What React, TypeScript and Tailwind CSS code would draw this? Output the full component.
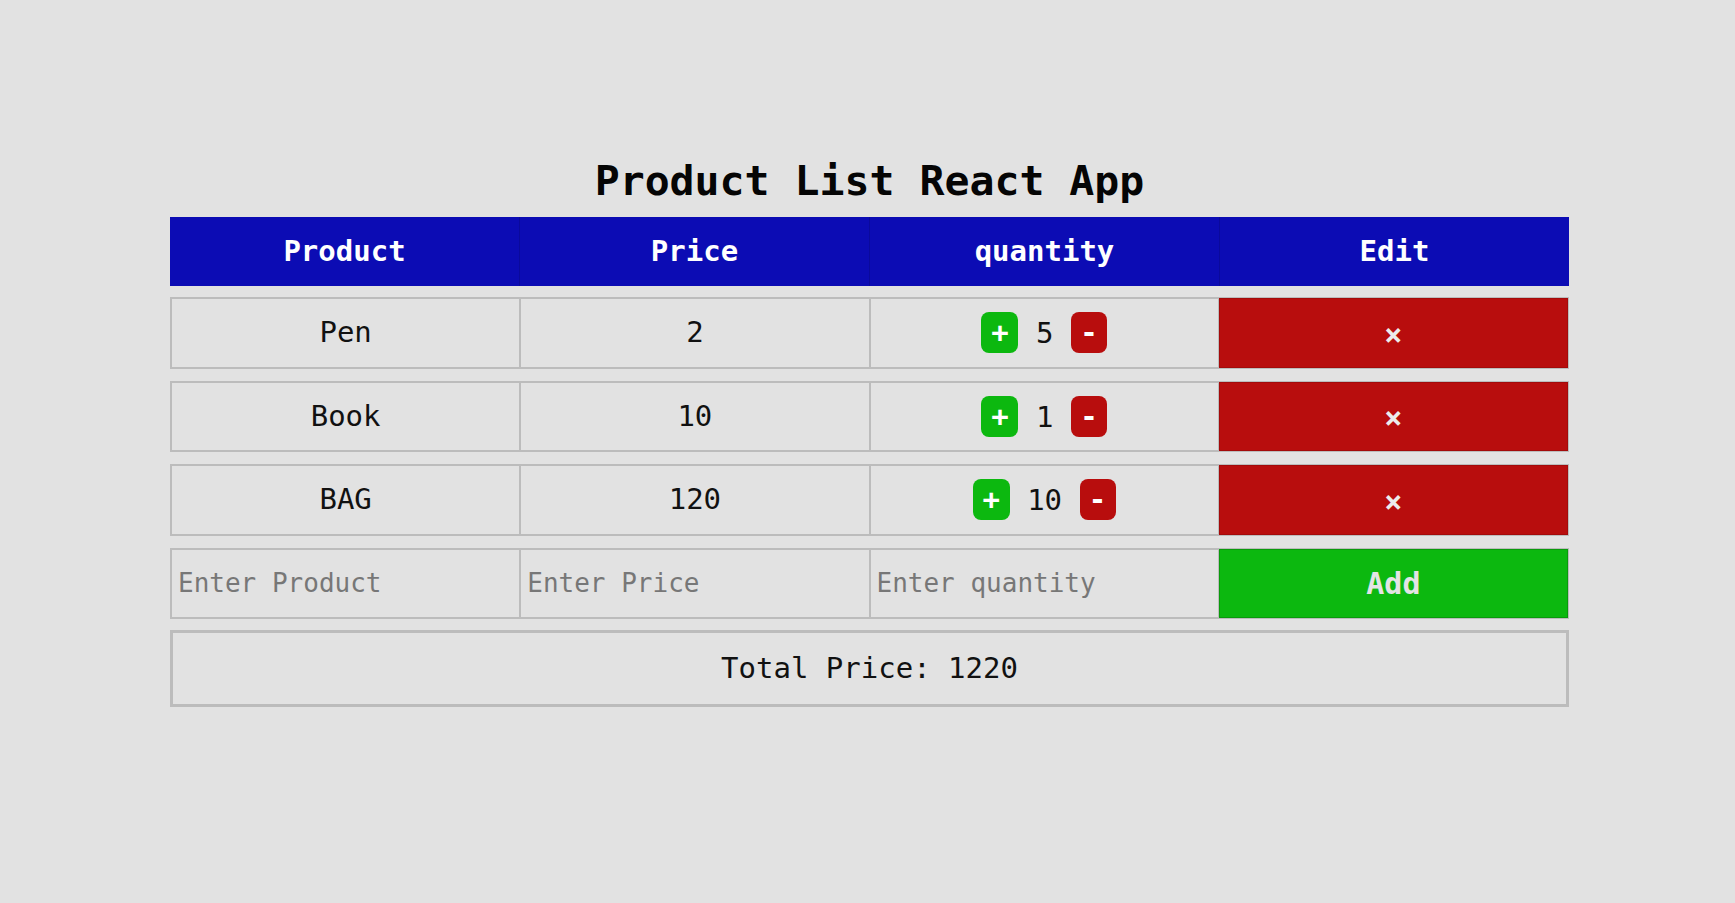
import React from "react";

const items = [
  { name: "Pen", price: 2, qty: 5 },
  { name: "Book", price: 10, qty: 1 },
  { name: "BAG", price: 120, qty: 10 },
];

function Cell({ children }: { children: React.ReactNode }) {
  return (
    <div className="flex-1 min-w-0 flex items-center justify-center border border-[#bcbcbc] text-[29px] text-[#111]">
      {children}
    </div>
  );
}

export default function App() {
  const total = items.reduce((s, i) => s + i.price * i.qty, 0);
  return (
    <div
      className="min-h-screen w-full bg-[#e2e2e2] pt-[157px] pl-[4px]"
      style={{ fontFamily: '"DejaVu Sans Mono", "Liberation Mono", monospace' }}
    >
      <div className="mx-auto w-[1399px] flex flex-col">
        <h1 className="h-[48px] leading-[48px] text-center text-[41.5px] font-bold text-[#050505]">
          Product List React App
        </h1>

        <div className="mt-[12px] h-[69px] flex bg-[#0c0cb4] text-white text-[29px] font-bold">
          <div className="flex-1 flex items-center justify-center">Product</div>
          <div className="flex-1 flex items-center justify-center border-l border-[#0a0a9c]">Price</div>
          <div className="flex-1 flex items-center justify-center border-l border-[#0a0a9c]">quantity</div>
          <div className="flex-1 flex items-center justify-center border-l border-[#0a0a9c]">Edit</div>
        </div>

        {items.map((it, idx) => (
          <div
            key={it.name}
            className={`${idx === 0 ? "mt-[11px]" : "mt-[12px]"} h-[71.5px] flex border border-[#bcbcbc]`}
          >
            <Cell>{it.name}</Cell>
            <Cell>{it.price}</Cell>
            <Cell>
              <div className="flex items-center gap-[17.5px]">
                <button className="w-[37px] h-[41px] rounded-[8px] bg-[#0cb80f] text-white font-bold text-[29px] leading-none flex items-center justify-center">
                  +
                </button>
                <span className="leading-none mt-[2px]">{it.qty}</span>
                <button className="w-[36px] h-[41px] rounded-[8px] bg-[#b80d0d] text-white font-bold text-[29px] leading-none flex items-center justify-center">
                  -
                </button>
              </div>
            </Cell>
            <button className="flex-1 min-w-0 flex items-center justify-center bg-[#b80d0d] border border-[#a30a0a] text-[#ececec] font-bold text-[30px]">
              <span className="mt-[3px]">×</span>
            </button>
          </div>
        ))}

        <div className="mt-[12px] h-[71.5px] flex border border-[#bcbcbc]">
          <div className="flex-1 min-w-0 flex border border-[#bcbcbc]">
            <input
              placeholder="Enter Product"
              className="w-full h-full bg-transparent outline-none pl-[6px] text-[26px] text-[#111] placeholder:text-[#777]"
            />
          </div>
          <div className="flex-1 min-w-0 flex border border-[#bcbcbc]">
            <input
              placeholder="Enter Price"
              className="w-full h-full bg-transparent outline-none pl-[6px] text-[26px] text-[#111] placeholder:text-[#777]"
            />
          </div>
          <div className="flex-1 min-w-0 flex border border-[#bcbcbc]">
            <input
              placeholder="Enter quantity"
              className="w-full h-full bg-transparent outline-none pl-[6px] text-[26px] text-[#111] placeholder:text-[#777]"
            />
          </div>
          <button className="flex-1 min-w-0 flex items-center justify-center bg-[#0cb80f] border border-[#0a9a0c] text-[#e4e4e4] font-bold text-[30px]">
            Add
          </button>
        </div>

        <div className="mt-[11px] h-[77px] flex items-center justify-center border-[3px] border-[#bcbcbc] text-[29px] text-[#111]">
          Total Price: {total}
        </div>
      </div>
    </div>
  );
}
